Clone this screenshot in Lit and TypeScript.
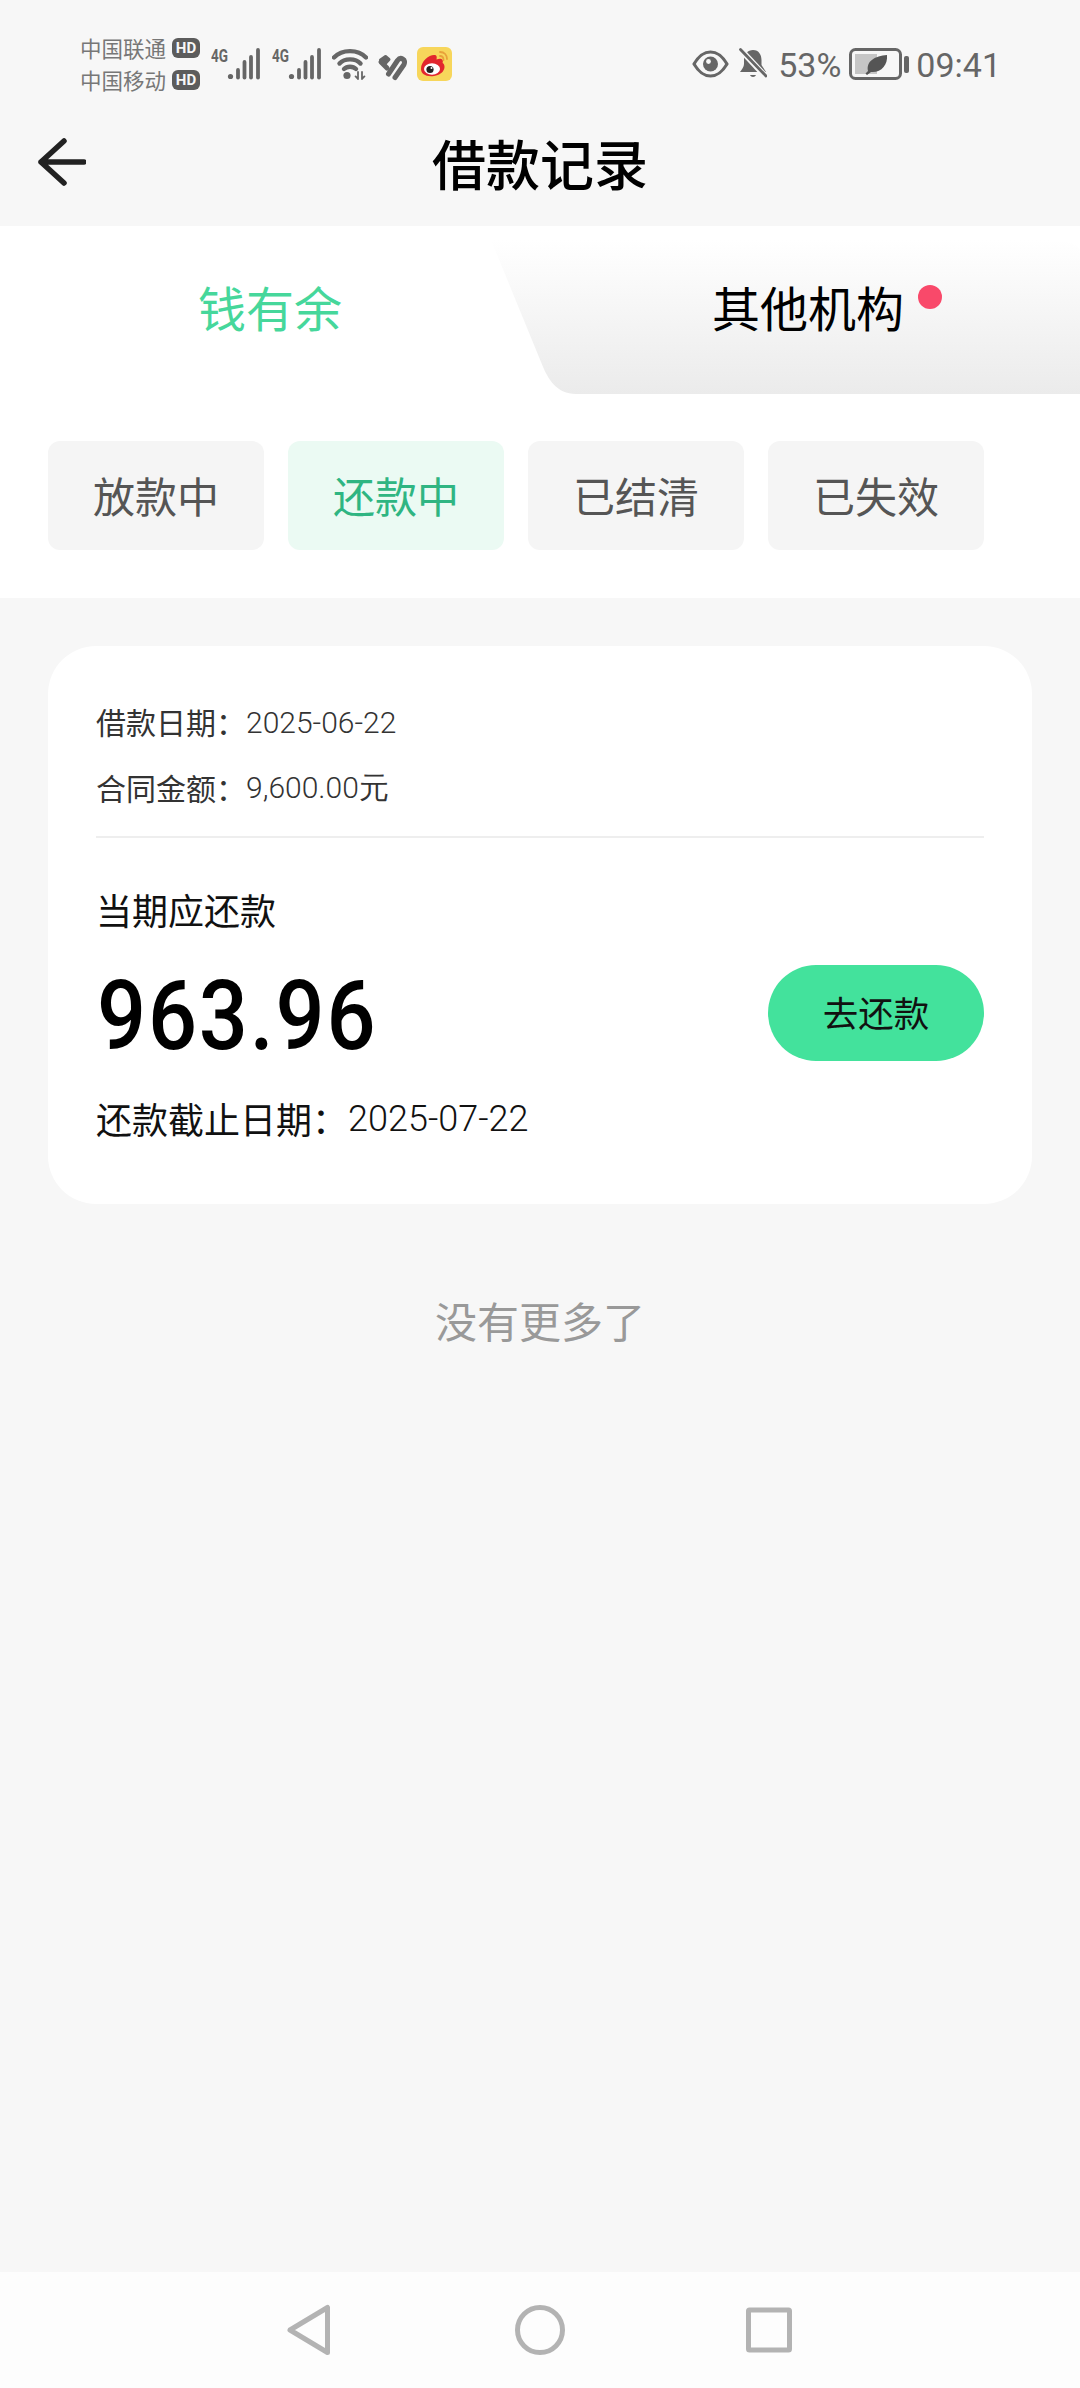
import { LitElement, html, css, svg } from "lit";
import { customElement } from "lit/decorators.js";

const signal = svg`<svg class="sig" width="50" height="46" viewBox="0 -6 50 46">
  <text x="0" y="15" class="g4" textLength="17" lengthAdjust="spacingAndGlyphs">4G</text>
  <circle cx="19.5" cy="29.5" r="2.6" fill="#666"/>
  <g stroke="#666" stroke-width="3.8" stroke-linecap="round">
    <line x1="27" y1="23" x2="27" y2="30.5"/>
    <line x1="33.5" y1="15" x2="33.5" y2="30.5"/>
    <line x1="40" y1="10" x2="40" y2="30.5"/>
    <line x1="47" y1="3" x2="47" y2="30.5"/>
  </g></svg>`;

@customElement("app-root")
export class AppRoot extends LitElement {
  static styles = css`
    :host { display: block; width: 1080px; height: 2388px; background: #f7f7f7; overflow: hidden;
      font-family: "Noto Sans CJK SC", "Noto Sans", sans-serif; }
    * { box-sizing: border-box; }
    .page { display: flex; flex-direction: column; height: 2388px; }
    .status { height: 72px; margin-top: 28px; padding: 0 79px 0 80px; display: flex; align-items: center; justify-content: space-between; color: #666; }
    .sleft, .sright { display: flex; align-items: center; }
    .carriers { display: flex; flex-direction: column; gap: 10px; width: 120px; }
    .carrier { display: flex; align-items: center; justify-content: space-between; height: 22px; font-size: 21.5px; line-height: 22px; color: #777; }
    .hd { width: 28px; height: 20px; border-radius: 6px; background: #5c5c5c; color: #f7f7f7; font: 700 15px/20px "Roboto", sans-serif; text-align: center; }
    .sig { margin-left: 11px; display: block; }
    .g4 { font: 700 18px "Roboto", sans-serif; fill: #666; }
    .wifi { margin-left: 10px; display: block; }
    .heart { margin: 6px 0 0 9px; display: block; }
    .weibo { margin-left: 10px; display: block; }
    .st { font: 400 34px/40px "Roboto", sans-serif; color: #666; padding-top: 2px; }
    .eye { display: block; }
    .bell { margin-left: 10px; display: block; }
    .pct { margin-left: 11px; }
    .batt { margin-left: 8px; display: block; }
    .time { margin-left: 7px; }
    .header { height: 126px; display: flex; align-items: center; justify-content: center; position: relative; }
    .back { position: absolute; left: 38px; top: 38px; display: block; }
    .title { font-size: 54px; font-weight: 500; line-height: 60px; color: #000; }
    .white { background: #fff; height: 372px; }
    .tabs { display: flex; height: 168px; }
    .tab { display: flex; justify-content: center; align-items: flex-start; font-size: 48px; line-height: 60px; }
    .tab-a { width: 491px; padding: 50px 0 0 49px; color: #46d79b; }
    .tab-b { width: 589px; height: 154px; margin-top: 14px; padding: 36px 0 0 83px; color: #000;
      background: linear-gradient(#ffffff, #ebebeb);
      clip-path: path("M0 0 L554 0 Q589 0 589 12 L589 154 L85 154 C66 154 57 140 50 122 Z"); }
    .dot { width: 24px; height: 24px; border-radius: 50%; background: #f9496a; margin: 9px 0 0 14px; flex: none; }
    .filters { display: flex; gap: 24px; padding: 47px 48px 0; }
    .filter { width: 216px; height: 109px; padding-bottom: 3px; border-radius: 12px; background: #f5f5f5; color: #555; font-size: 42px; display: flex; align-items: center; justify-content: center; }
    .filter.on { background: #ebfaf3; color: #2fb582; }
    .card { margin: 48px 48px 0; height: 558px; background: #fff; border-radius: 48px; padding: 54px 48px 0; }
    .row { height: 44px; display: flex; align-items: center; font-size: 30px; color: #333; }
    .row + .row { margin-top: 22px; }
    .num { font-family: "Roboto", sans-serif; font-weight: 300; }
    .row .label { width: 150px; flex: none; padding-bottom: 2px; }
    .rule { height: 2px; background: #eee; margin-top: 26px; }
    .due { height: 50px; margin-top: 46px; font-size: 36px; line-height: 50px; color: #111; }
    .amt { height: 96px; margin-top: 31px; display: flex; align-items: center; justify-content: space-between; }
    .money { display: inline-block; font: 500 96px/96px "Roboto", sans-serif; letter-spacing: 2px; color: #000; margin: 5px 0 0 1px;
      transform: scaleX(0.9); transform-origin: left center; }
    .pay { width: 216px; height: 96px; padding-bottom: 3px; border-radius: 48px; background: #43e29c; color: #111; font-size: 35.5px; display: flex; align-items: center; justify-content: center; }
    .deadline { height: 50px; margin-top: 33px; display: flex; align-items: center; font-size: 36px; color: #111; }
    .deadline .label { width: 252px; flex: none; padding-bottom: 3px; }
    .more { height: 60px; margin-top: 86px; text-align: center; font-size: 42px; line-height: 60px; color: #999; }
    .nav { margin-top: auto; height: 116px; background: #fdfdfd; display: flex; align-items: center; padding-left: 283px; gap: 182px; }
    .nav svg { display: block; }
    .nav .sq { margin-left: -3px; }
  `;

  render() {
    return html`<div class="page">
      <div class="status">
        <div class="sleft">
          <div class="carriers">
            <div class="carrier"><span>中国联通</span><span class="hd">HD</span></div>
            <div class="carrier"><span>中国移动</span><span class="hd">HD</span></div>
          </div>
          ${signal}${signal}
          <svg class="wifi" width="36" height="32" viewBox="0 0 36 32" fill="none" stroke="#666" stroke-width="4.4" stroke-linecap="round">
            <path d="M2 9.5 C10 1 26 1 34 9.5"/>
            <path d="M7.5 15.5 C12.5 10 23.5 10 28.5 15.5"/>
            <path d="M12 21 C15 18 21 18 24 21"/>
            <circle cx="15" cy="27.5" r="3.6" fill="#666" stroke="none"/>
            <path d="M26 24 V31 M26 31 l-2.4 -2.6 M30 31 V24 M30 31 l2.4 -2.6" stroke-width="1.8"/>
          </svg>
          <svg class="heart" width="30" height="28" viewBox="0 0 30 28" fill="none" stroke="#666" stroke-width="5" stroke-linecap="round" stroke-linejoin="round">
            <path d="M3.5 7 L8.5 3.5 L12 6.5 L7 12 Z" fill="#666" stroke-width="3"/>
            <path d="M4 9 L10 15"/>
            <path d="M11.5 21 L20.5 7.5 C23.5 3.5 29 6 27 11.5 L18 24.5"/>
          </svg>
          <svg class="weibo" width="35" height="34" viewBox="0 0 35 34">
            <rect width="35" height="34" rx="6" fill="#f7d65b"/>
            <path d="M4 22 C4 14 12 8 17 8 C20 8 20 10 19.5 12.5 C24 10.5 27 12.5 25.5 16 C29 17.5 29 27 17 29 C9 30 4 27 4 22 Z" fill="#e2262d"/>
            <ellipse cx="15" cy="22" rx="8" ry="5.8" fill="#fff"/>
            <circle cx="13" cy="22.5" r="3.6" fill="#222"/>
            <circle cx="14.5" cy="21" r="1" fill="#fff"/>
            <path d="M23 5 C27.5 5 30 8 30 12 M23 9 C25 9 26.5 10.5 26.5 13" fill="none" stroke="#e8a13a" stroke-width="1.8" stroke-linecap="round"/>
          </svg>
        </div>
        <div class="sright">
          <svg class="eye" width="37" height="28" viewBox="0 0 37 28">
            <path d="M2 14 C8 4 13 2 18.5 2 C24 2 29 4 35 14 C29 24 24 26 18.5 26 C13 26 8 24 2 14 Z" fill="none" stroke="#666" stroke-width="3.2" stroke-linejoin="round"/>
            <circle cx="18.5" cy="14" r="7.5" fill="#666"/>
            <circle cx="16.5" cy="11.5" r="2.4" fill="#f7f7f7"/>
          </svg>
          <svg class="bell" width="28" height="32" viewBox="0 0 28 32">
            <path d="M14 2 C20 2 22.5 7 22.5 12 L22.5 17 L27 24 L1 24 C3 21 5 19 5 16 L5 11 C5 6 9 2 14 2 Z" fill="#666"/>
            <path d="M11 27 H17 C16 29.5 12 29.5 11 27 Z" fill="#666"/>
            <path d="M1 1 L27 29" stroke="#f7f7f7" stroke-width="6"/>
            <path d="M1.5 1.5 L27 28" stroke="#666" stroke-width="2.8" stroke-linecap="round"/>
          </svg>
          <span class="st pct">53%</span>
          <svg class="batt" width="60" height="32" viewBox="0 0 60 32">
            <rect x="1.5" y="1.5" width="50" height="29" rx="5" fill="none" stroke="#666" stroke-width="3"/>
            <rect x="6" y="6" width="22" height="20" fill="#c6c6c6"/>
            <path d="M19 23 C17 13 26 8 38 7 C39 17 32 25 22 24 L18 27 L16.5 25.5 Z" fill="#555"/>
            <rect x="55" y="8" width="5" height="17" rx="2" fill="#666"/>
          </svg>
          <span class="st time">09:41</span>
        </div>
      </div>
      <div class="header">
        <svg class="back" width="48" height="48" viewBox="0 0 48 48" fill="none" stroke="#222" stroke-width="5.5" stroke-linecap="round" stroke-linejoin="round">
          <path d="M26 3 L3 24 L26 45 M3 24 H46"/>
        </svg>
        <div class="title">借款记录</div>
      </div>
      <div class="white">
        <div class="tabs">
          <div class="tab tab-a">钱有余</div>
          <div class="tab tab-b"><span>其他机构</span><span class="dot"></span></div>
        </div>
        <div class="filters">
          <div class="filter">放款中</div>
          <div class="filter on">还款中</div>
          <div class="filter">已结清</div>
          <div class="filter">已失效</div>
        </div>
      </div>
      <div class="card">
        <div class="row"><span class="label">借款日期：</span><span class="num">2025-06-22</span></div>
        <div class="row"><span class="label">合同金额：</span><span class="num">9,600.00元</span></div>
        <div class="rule"></div>
        <div class="due">当期应还款</div>
        <div class="amt"><span class="money">963.96</span><span class="pay">去还款</span></div>
        <div class="deadline"><span class="label">还款截止日期：</span><span class="num">2025-07-22</span></div>
      </div>
      <div class="more">没有更多了</div>
      <div class="nav">
        <svg width="50" height="52" viewBox="0 0 50 52" fill="none" stroke="#b3b3b3" stroke-width="5" stroke-linejoin="round"><path d="M7 26 L44.5 3.5 V48.5 Z"/></svg>
        <svg width="50" height="52" viewBox="0 0 50 52" fill="none" stroke="#b3b3b3" stroke-width="5"><circle cx="25" cy="26" r="22.5"/></svg>
        <svg class="sq" width="50" height="52" viewBox="0 0 50 52" fill="none" stroke="#b3b3b3" stroke-width="5" stroke-linejoin="round"><rect x="4.5" y="6" width="41" height="40" rx="1"/></svg>
      </div>
    </div>`;
  }
}
